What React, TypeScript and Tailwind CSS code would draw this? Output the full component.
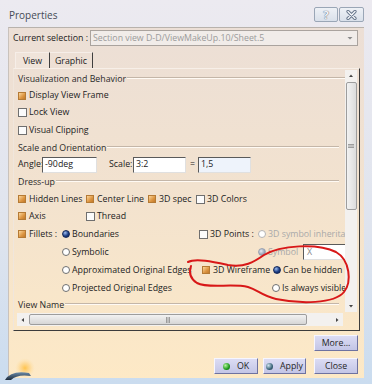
import React from "react";

function Check({ on }: { on?: boolean }) {
  return on ? (
    <span className="inline-block h-[8px] w-[8px] shrink-0 border border-[#b57a34] bg-[linear-gradient(135deg,#fbd79c,#dc9440_60%,#c07a2c)]" />
  ) : (
    <span className="inline-block h-[9px] w-[9px] shrink-0 border border-[#6f6f6f] bg-[#fbfbfb]" />
  );
}

function Radio({ on, dim }: { on?: boolean; dim?: boolean }) {
  if (on && dim)
    return <span className="inline-block h-[8px] w-[8px] shrink-0 rounded-full border border-[#9aa3b2] bg-[radial-gradient(circle_at_35%_35%,#e6ebf3,#8f9bb0_70%)]" />;
  if (on)
    return <span className="inline-block h-[8px] w-[8px] shrink-0 rounded-full border border-[#14285a] bg-[radial-gradient(circle_at_35%_30%,#9fbdf0,#1d3f86_55%,#0b1d4a)]" />;
  return <span className={`inline-block h-[8px] w-[8px] shrink-0 rounded-full border bg-white ${dim ? "border-[#b4b4b4]" : "border-[#6f6f6f]"}`} />;
}

function Section({ label }: { label: string }) {
  return (
    <div className="flex h-[16px] items-center pr-[2px]">
      <span className="text-[#2a2a2a]">{label}</span>
      <div className="ml-[1px] mt-[-3px] flex-1 border-t border-b border-t-[#c4b6a8] border-b-[#fffaf4]" />
    </div>
  );
}

function Btn({ w, children, dot }: { w: string; children: React.ReactNode; dot?: string }) {
  return (
    <div
      className={`${w} flex h-[16px] items-center justify-center gap-[7px] border border-t-[#f6f6ff] border-l-[#f6f6ff] border-r-[#6e72a0] border-b-[#6e72a0] bg-[linear-gradient(#dcdcf4,#c3c5e6)] text-[#262626]`}
    >
      {dot && <span className={`h-[7px] w-[7px] rounded-full ${dot}`} />}
      <span>{children}</span>
    </div>
  );
}

function Field({ w, children, tint }: { w: string; children?: React.ReactNode; tint?: boolean }) {
  return (
    <div
      className={`${w} flex h-[16px] items-center border border-t-[#5a5a5a] border-l-[#5a5a5a] border-r-[#e0e0e0] border-b-[#e0e0e0] pl-[2px] ${tint ? "bg-[#eef3fb]" : "bg-white"}`}
    >
      {children}
    </div>
  );
}

export default function App() {
  return (
    <div className="relative h-[384px] w-[372px] overflow-hidden whitespace-nowrap bg-[linear-gradient(#eceaf0,#dfe4ee_60%,#cadcef)] font-['Open_Sans',sans-serif] text-[8.8px] leading-none text-[#222]">
      {/* title bar */}
      <div className="flex h-[27px] items-start">
        <span className="ml-[9px] mt-[10px] text-[10px] text-[#454a55]">Properties</span>
        <div className="ml-auto mr-[8px] mt-[7px] flex gap-[1px]">
          <div className="flex h-[15px] w-[24px] items-center justify-center rounded-[2px] border border-[#9aa6b6] bg-[linear-gradient(#eef1f6,#d9e0ea)] text-[11px] font-bold text-[#f4f6fa] [text-shadow:0_0_1px_#5d6b80,0_0_1px_#5d6b80]">
            ?
          </div>
          <div className="flex h-[15px] w-[25px] items-center justify-center rounded-[2px] border border-[#9aa6b6] bg-[linear-gradient(#eef1f6,#d9e0ea)]">
            <svg width="11" height="10" viewBox="0 0 11 10">
              <path d="M2 1.5 L9 8.5 M9 1.5 L2 8.5" stroke="#66758a" strokeWidth="3.2" strokeLinecap="round" />
              <path d="M2 1.5 L9 8.5 M9 1.5 L2 8.5" stroke="#f4f6fa" strokeWidth="1.4" strokeLinecap="round" />
            </svg>
          </div>
        </div>
      </div>

      {/* client area */}
      <div className="mx-[8px] flex h-[351px] flex-col border-t border-l border-t-[#b8b2ac] border-l-[#c9c2bc] bg-[linear-gradient(#ecdfd6,#f2e2cf_45%,#fde9c6)]">
        <div className="mt-[2px] flex h-[16px] items-center pl-[4px]">
          <span className="w-[77px] text-[#222]">Current selection :</span>
          <div className="flex h-[16px] w-[268px] items-center border border-[#aaa39e] bg-[#f1ece9] pl-[2px] text-[#9b9b9b]">
            <span className="flex-1">Section view D-D/ViewMakeUp.10/Sheet.5</span>
            <svg width="12" height="8" viewBox="0 0 12 8" className="mr-[1px]">
              <path d="M3.5 3 L8.5 3 L6 5.5 Z" fill="#8a8a8a" />
            </svg>
          </div>
        </div>

        {/* tabs */}
        <div className="ml-[6px] mt-[6px] flex h-[16px]">
          <div className="flex w-[35px] items-center justify-center border-t border-l border-r border-t-[#f6eee8] border-l-[#f6eee8] border-r-[#3f3f3f] bg-[#f0e4da] pt-[1px]">
            View
          </div>
          <div className="flex w-[43px] items-center justify-center border-t border-r border-t-[#f6eee8] border-r-[#3f3f3f] pt-[1px]">
            Graphic
          </div>
        </div>

        {/* tab panel */}
        <div className="ml-[4px] flex h-[263px] w-[347px] flex-col border border-t-[#f7efe8] border-l-[#f0e6dc] border-r-[#3c3c3c] border-b-[#3c3c3c]">
          <div className="flex h-[243px]">
            <div className="flex-1 overflow-hidden pl-[4px] pt-[2px]">
              <div className="w-[360px]">
                <Section label="Visualization and Behavior" />
                <div className="flex h-[17px] items-center gap-[3px]">
                  <Check on /> <span>Display View Frame</span>
                </div>
                <div className="flex h-[17px] items-center gap-[2px]">
                  <Check /> <span>Lock View</span>
                </div>
                <div className="flex h-[18px] items-center gap-[2px]">
                  <Check /> <span>Visual Clipping</span>
                </div>
                <div className="h-[17px] pt-[1px]">
                  <div className="w-[323px]">
                    <Section label="Scale and Orientation" />
                  </div>
                </div>
                <div className="flex h-[17px] items-center">
                  <span className="w-[24px]">Angle:</span>
                  <Field w="w-[55px]">-90deg</Field>
                  <span className="ml-[12px] w-[24px]">Scale:</span>
                  <Field w="w-[53px]">3:2</Field>
                  <span className="ml-[4px] w-[8px]">=</span>
                  <Field w="w-[53px]" tint>
                    1,5
                  </Field>
                </div>
                <div className="h-[18px] pt-[1px]">
                  <div className="w-[323px]">
                    <Section label="Dress-up" />
                  </div>
                </div>
                <div className="flex h-[17px] items-center">
                  <div className="flex w-[68px] items-center gap-[3px]">
                    <Check on /> <span>Hidden Lines</span>
                  </div>
                  <div className="flex w-[62px] items-center gap-[3px]">
                    <Check on /> <span>Center Line</span>
                  </div>
                  <div className="flex w-[48px] items-center gap-[3px]">
                    <Check on /> <span>3D spec</span>
                  </div>
                  <div className="flex items-center gap-[2px]">
                    <Check /> <span>3D Colors</span>
                  </div>
                </div>
                <div className="flex h-[17px] items-center">
                  <div className="flex w-[68px] items-center gap-[3px]">
                    <Check on /> <span>Axis</span>
                  </div>
                  <div className="flex items-center gap-[2px]">
                    <Check /> <span>Thread</span>
                  </div>
                </div>
                <div className="flex h-[18px] items-center">
                  <div className="flex w-[44px] items-center gap-[3px]">
                    <Check on /> <span>Fillets :</span>
                  </div>
                  <div className="flex w-[137px] items-center gap-[2px]">
                    <Radio on /> <span>Boundaries</span>
                  </div>
                  <div className="flex w-[59px] items-center gap-[2px]">
                    <Check /> <span>3D Points :</span>
                  </div>
                  <div className="flex items-center gap-[2px] text-[#a9a9a9]">
                    <Radio dim /> <span>3D symbol inheritance</span>
                  </div>
                </div>
                <div className="flex h-[18px] items-center">
                  <div className="w-[44px]" />
                  <div className="flex w-[196px] items-center gap-[2px]">
                    <Radio /> <span>Symbolic</span>
                  </div>
                  <div className="flex w-[45px] items-center gap-[2px] text-[#a9a9a9]">
                    <Radio on dim /> <span>Symbol</span>
                  </div>
                  <div className="flex h-[16px] w-[60px] items-center border border-t-[#5a5a5a] border-l-[#5a5a5a] border-r-[#e0e0e0] border-b-[#e0e0e0] bg-white pl-[3px] text-[#8a8a8a]">
                    X
                  </div>
                </div>
                <div className="flex h-[18px] items-center">
                  <div className="w-[44px]" />
                  <div className="flex w-[140px] items-center gap-[2px]">
                    <Radio /> <span>Approximated Original Edges</span>
                  </div>
                  <div className="flex w-[71px] items-center gap-[3px]">
                    <Check on /> <span>3D Wireframe</span>
                  </div>
                  <div className="flex items-center gap-[2px]">
                    <Radio on /> <span>Can be hidden</span>
                  </div>
                </div>
                <div className="flex h-[18px] items-center">
                  <div className="w-[44px]" />
                  <div className="flex w-[210px] items-center gap-[2px]">
                    <Radio /> <span>Projected Original Edges</span>
                  </div>
                  <div className="flex items-center gap-[2px]">
                    <Radio /> <span>Is always visible</span>
                  </div>
                </div>
                <div className="w-[323px]">
                  <Section label="View Name" />
                </div>
              </div>
            </div>
            {/* vertical scrollbar */}
            <div className="mr-[2px] mt-[1px] flex h-[242px] w-[12px] flex-col items-center bg-[#f3f1ef]">
              <svg width="12" height="12" viewBox="0 0 12 12">
                <path d="M4 7 L8 7 L6 4.5 Z" fill="#444" />
              </svg>
              <div className="flex h-[128px] w-[11px] items-center justify-center rounded-[2px] border border-[#9d9d9d] bg-[linear-gradient(90deg,#f2f2f2,#dcdcdc)]">
                <svg width="6" height="6" viewBox="0 0 6 6">
                  <path d="M0 1.5 H6 M0 3 H6 M0 4.5 H6" stroke="#8a8a8a" strokeWidth="0.8" />
                </svg>
              </div>
              <div className="flex-1" />
              <svg width="12" height="12" viewBox="0 0 12 12">
                <path d="M4 5 L8 5 L6 7.5 Z" fill="#444" />
              </svg>
            </div>
          </div>
          {/* horizontal scrollbar */}
          <div className="ml-[3px] mt-[1px] flex h-[13px] w-[326px] items-center bg-[#f3f1ef]">
            <svg width="12" height="12" viewBox="0 0 12 12">
              <path d="M7 4 L7 8 L4.5 6 Z" fill="#444" />
            </svg>
            <div className="flex h-[11px] w-[278px] items-center justify-center rounded-[2px] border border-[#9d9d9d] bg-[linear-gradient(#f2f2f2,#d6d6d6)]">
              <svg width="6" height="6" viewBox="0 0 6 6">
                <path d="M1.5 0 V6 M3 0 V6 M4.5 0 V6" stroke="#8a8a8a" strokeWidth="0.8" />
              </svg>
            </div>
            <div className="flex-1" />
            <svg width="12" height="12" viewBox="0 0 12 12">
              <path d="M5 4 L5 8 L7.5 6 Z" fill="#444" />
            </svg>
          </div>
        </div>

        {/* buttons */}
        <div className="mr-[6px] mt-[4px] flex justify-end">
          <Btn w="w-[44px]">More...</Btn>
        </div>
        <div className="mr-[6px] mt-[7px] flex justify-end">
          <Btn w="w-[44px]" dot="bg-[radial-gradient(circle_at_35%_35%,#b6f5a0,#1c9a1c_60%,#0d5a0d)]">
            OK
          </Btn>
          <div className="w-[5px]" />
          <Btn w="w-[43px]" dot="bg-[radial-gradient(circle_at_35%_35%,#d0e4f0,#3a6478_60%,#1a3040)]">
            Apply
          </Btn>
          <div className="w-[8px]" />
          <Btn w="w-[44px]">Close</Btn>
        </div>
      </div>

      {/* app logo in the frame corner */}
      <svg className="absolute left-[3px] top-[358px]" width="32" height="24" viewBox="0 0 32 24">
        <defs>
          <radialGradient id="glow" cx="22" cy="10" r="10" gradientUnits="userSpaceOnUse">
            <stop offset="0" stopColor="#ffc040" stopOpacity="0.9" />
            <stop offset="0.5" stopColor="#ffc860" stopOpacity="0.45" />
            <stop offset="1" stopColor="#ffe0a0" stopOpacity="0" />
          </radialGradient>
          <linearGradient id="swoosh" x1="0" y1="0" x2="0" y2="1">
            <stop offset="0" stopColor="#6a8aa8" />
            <stop offset="1" stopColor="#1e2c3c" />
          </linearGradient>
        </defs>
        <circle cx="22" cy="10" r="10" fill="url(#glow)" />
        <path d="M2 22 Q8 12 26 15 L28 18 Q14 16 8 22 Z" fill="url(#swoosh)" />
      </svg>

      {/* red hand-drawn annotation */}
      <svg className="pointer-events-none absolute left-0 top-0" width="372" height="384" viewBox="0 0 372 384">
        <path
          d="M188 262 C196 258 214 262 228 265 C244 268 254 262 264 255 C280 245 318 243 336 252 C350 260 352 282 344 292 C334 304 300 304 276 299 C262 296 258 290 248 287 C232 283 208 289 197 283 C189 278 189 272 191 266"
          fill="none"
          stroke="#d81818"
          strokeWidth="2"
          strokeLinecap="round"
        />
      </svg>
    </div>
  );
}
